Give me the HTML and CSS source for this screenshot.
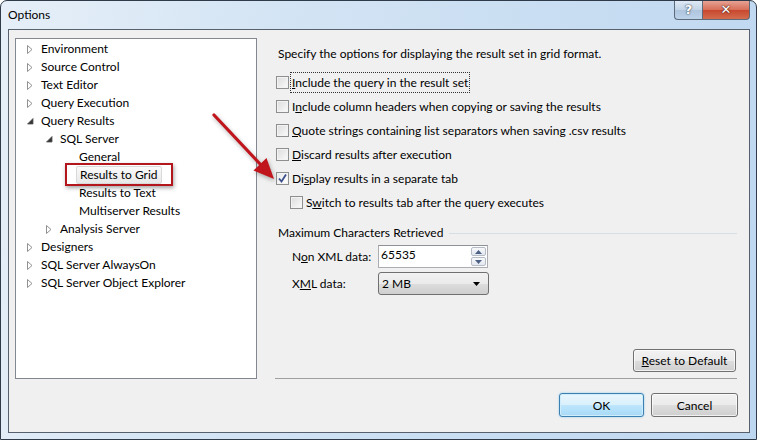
FILE: index.html
```html
<!DOCTYPE html>
<html lang="en">
<head>
  <meta charset="UTF-8" />
  <title>Options</title>
  <link rel="stylesheet" href="styles.css">
</head>
<body>
  <div class="window">
    <div class="titlebar">
      <span class="title">Options</span>
      <div class="caption">
        <span class="cap help">?</span>
        <span class="cap close">&#x2715;</span>
      </div>
    </div>

    <div class="client">
      <div class="main">
        <div class="tree">
          <div class="node l0"><span class="exp"><svg width="6" height="9"><polygon points="0.5,0.5 5,4.5 0.5,8.5" fill="#fff" stroke="#919191"/></svg></span>Environment</div>
          <div class="node l0"><span class="exp"><svg width="6" height="9"><polygon points="0.5,0.5 5,4.5 0.5,8.5" fill="#fff" stroke="#919191"/></svg></span>Source Control</div>
          <div class="node l0"><span class="exp"><svg width="6" height="9"><polygon points="0.5,0.5 5,4.5 0.5,8.5" fill="#fff" stroke="#919191"/></svg></span>Text Editor</div>
          <div class="node l0"><span class="exp"><svg width="6" height="9"><polygon points="0.5,0.5 5,4.5 0.5,8.5" fill="#fff" stroke="#919191"/></svg></span>Query Execution</div>
          <div class="node l0"><span class="exp"><svg width="7" height="7"><polygon points="6,0.5 6,6 0.5,6" fill="#333" stroke="#555" stroke-width="0.8"/></svg></span>Query Results</div>
          <div class="node l1"><span class="exp"><svg width="7" height="7"><polygon points="6,0.5 6,6 0.5,6" fill="#333" stroke="#555" stroke-width="0.8"/></svg></span>SQL Server</div>
          <div class="node l2"><span class="exp"></span>General</div>
          <div class="node l2 selected"><span class="exp"></span><span class="sel">Results to Grid</span><span class="callout"></span></div>
          <div class="node l2"><span class="exp"></span>Results to Text</div>
          <div class="node l2"><span class="exp"></span>Multiserver Results</div>
          <div class="node l1"><span class="exp"><svg width="6" height="9"><polygon points="0.5,0.5 5,4.5 0.5,8.5" fill="#fff" stroke="#919191"/></svg></span>Analysis Server</div>
          <div class="node l0"><span class="exp"><svg width="6" height="9"><polygon points="0.5,0.5 5,4.5 0.5,8.5" fill="#fff" stroke="#919191"/></svg></span>Designers</div>
          <div class="node l0"><span class="exp"><svg width="6" height="9"><polygon points="0.5,0.5 5,4.5 0.5,8.5" fill="#fff" stroke="#919191"/></svg></span>SQL Server AlwaysOn</div>
          <div class="node l0"><span class="exp"><svg width="6" height="9"><polygon points="0.5,0.5 5,4.5 0.5,8.5" fill="#fff" stroke="#919191"/></svg></span>SQL Server Object Explorer</div>
        </div>

        <div class="page">
          <div class="page-body">
            <p class="intro">Specify the options for displaying the result set in grid format.</p>

            <div class="check"><span class="cb"></span><span class="lbl focus"><u>I</u>nclude the query in the result set</span></div>
            <div class="check"><span class="cb"></span><span class="lbl">I<u>n</u>clude column headers when copying or saving the results</span></div>
            <div class="check"><span class="cb"></span><span class="lbl"><u>Q</u>uote strings containing list separators when saving .csv results</span></div>
            <div class="check"><span class="cb"></span><span class="lbl"><u>D</u>iscard results after execution</span></div>
            <div class="check"><span class="cb on"><svg width="11" height="11"><path d="M2 5.5 L4.5 8.5 L9 1.5" fill="none" stroke="#3b4f8c" stroke-width="1.8"/></svg></span><span class="lbl">Di<u>s</u>play results in a separate tab</span></div>
            <div class="check sub"><span class="cb"></span><span class="lbl">S<u>w</u>itch to results tab after the query executes</span></div>

            <div class="group">
              <div class="group-head">Maximum Characters Retrieved</div>
              <div class="field">
                <span class="flabel">N<u>o</u>n XML data:</span>
                <div class="spin">
                  <span class="spin-val">65535</span>
                  <span class="spin-btns">
                    <span class="sb"><svg width="7" height="4"><polygon points="3.5,0 7,4 0,4" fill="#4d6185"/></svg></span>
                    <span class="sb"><svg width="7" height="4"><polygon points="0,0 7,0 3.5,4" fill="#4d6185"/></svg></span>
                  </span>
                </div>
              </div>
              <div class="field">
                <span class="flabel">X<u>M</u>L data:</span>
                <div class="combo">
                  <span>2 MB</span>
                  <svg width="7" height="4"><polygon points="0,0 7,0 3.5,4" fill="#000"/></svg>
                </div>
              </div>
            </div>
          </div>
          <div class="page-foot">
            <button class="btn reset"><u>R</u>eset to Default</button>
          </div>
        </div>
      </div>

      <div class="footer">
        <button class="btn ok">OK</button>
        <button class="btn cancel">Cancel</button>
      </div>
    </div>

    <svg class="arrow" width="757" height="440">
      <line x1="214" y1="115" x2="261" y2="165" stroke="#c0151c" stroke-width="3.2" stroke-linecap="round"/>
      <polygon points="274,179 253.5,170.5 266.5,158" fill="#c0151c"/>
    </svg>
  </div>
</body>
</html>
```

FILE: styles.css
```css
body {
  margin: 0;
  font-family: Lato, "Noto Sans", sans-serif;
  font-size: 12px;
  color: #000;
}

.window {
  position: relative;
  width: 757px;
  height: 440px;
  box-sizing: border-box;
  border: 1px solid #2f3b48;
  border-radius: 7px 7px 0 0;
  background: linear-gradient(100deg, #e6eff8 0%, #d3e4f4 35%, #bed7f0 100%);
  display: flex;
  flex-direction: column;
  overflow: hidden;
}

.titlebar {
  height: 28px;
  display: flex;
  justify-content: space-between;
  align-items: flex-start;
  padding: 0 6px 0 7px;
}
.title {
  line-height: 28px;
  font-size: 12px;
}
.caption {
  display: flex;
  margin-top: -1px;
}
.cap {
  height: 19px;
  display: flex;
  align-items: center;
  justify-content: center;
  border: 1px solid #5c6a7a;
  border-top: none;
  font-family: "DejaVu Sans", sans-serif;
  font-weight: bold;
  color: #fff;
}
.help {
  width: 27px;
  border-radius: 0 0 0 4px;
  border-right: none;
  background: linear-gradient(#e2ecf6, #c3d5e8 50%, #aec4dc 51%, #bcd3ea);
  color: #fff;
  font-size: 13px;
  text-shadow: 0 0 2px #3b4a5c, 0 0 1px #3b4a5c;
}
.close {
  width: 46px;
  border-radius: 0 0 4px 0;
  background: linear-gradient(#e8a89a, #d8705a 50%, #c7452c 51%, #d36c4f);
  font-size: 13px;
  text-shadow: 0 0 2px #4a1a12, 0 0 1px #4a1a12;
}

.client {
  flex: 1;
  margin: 0 6px 6px 7px;
  border: 1px solid #56616d;
  background: #f0f0f0;
  display: flex;
  flex-direction: column;
  padding: 8px 12px 0 6px;
}

.main {
  display: flex;
  gap: 18px;
  height: 341px;
}

/* tree */
.tree {
  width: 242px;
  box-sizing: border-box;
  border: 1px solid #828790;
  background: #fff;
  padding-top: 1px;
}
.node {
  position: relative;
  height: 18px;
  line-height: 18px;
  display: flex;
  align-items: center;
  white-space: nowrap;
}
.node.l0 { padding-left: 10px; }
.node.l1 { padding-left: 29px; }
.node.l2 { padding-left: 48px; }
.exp {
  width: 15px;
  display: flex;
  align-items: center;
  padding-left: 1px;
  box-sizing: border-box;
}
.sel {
  margin-left: -3px;
  padding: 0 3px;
  line-height: 16px;
  border: 1px solid #d9d9d9;
  border-radius: 2px;
  background: linear-gradient(#fafafa, #e8e8e8);
}
.callout {
  position: absolute;
  left: 49px;
  top: -3px;
  width: 108px;
  height: 23px;
  box-sizing: border-box;
  border: 2px solid #b3161d;
  box-shadow: 1px 2px 4px rgba(0, 0, 0, 0.35);
}

/* right page */
.page {
  flex: 1;
  display: flex;
  flex-direction: column;
}
.page-body {
  flex: 1;
  padding-top: 8px;
}
.intro {
  margin: 0 0 8px 3px;
  line-height: 16px;
}
.check {
  height: 24px;
  display: flex;
  align-items: center;
  margin-left: 1px;
}
.check.sub {
  margin-left: 15px;
}
.cb {
  width: 13px;
  height: 13px;
  box-sizing: border-box;
  border: 1px solid #8e8f8f;
  background: linear-gradient(135deg, #dcdcdc, #fbfbfb);
  box-shadow: inset 0 0 0 1px #f3f3f3;
  display: flex;
  align-items: center;
  justify-content: center;
}
.cb.on {
  background: linear-gradient(135deg, #e8e8e8, #ffffff);
}
.lbl {
  margin-left: 1px;
  line-height: 15px;
  padding: 2px 1px;
  border: 1px dotted transparent;
}
.lbl.focus {
  border-color: #333;
}

.group {
  margin-top: 11px;
}
.group-head {
  display: flex;
  align-items: center;
  margin-left: 3px;
  line-height: 16px;
}
.group-head::after {
  content: "";
  flex: 1;
  margin-left: 6px;
  border-top: 1px solid #d5dfe5;
}
.field {
  display: flex;
  align-items: center;
  margin-top: 4px;
  padding-left: 17px;
}
.flabel {
  width: 86px;
}
.spin {
  width: 110px;
  height: 23px;
  box-sizing: border-box;
  border: 1px solid #abadb3;
  border-top-color: #8e9196;
  background: #fff;
  display: flex;
  justify-content: space-between;
}
.spin-val {
  padding: 1px 0 0 2px;
  line-height: 16px;
}
.spin-btns {
  display: flex;
  flex-direction: column;
  justify-content: center;
  gap: 1px;
  padding: 1px;
}
.sb {
  width: 15px;
  height: 9px;
  display: flex;
  align-items: center;
  justify-content: center;
  border: 1px solid #b6bcc6;
  border-radius: 2px;
  box-sizing: border-box;
  background: linear-gradient(#f7f9fb, #e3e8ef);
}
.combo {
  width: 111px;
  height: 23px;
  box-sizing: border-box;
  border: 1px solid #707070;
  border-radius: 3px;
  background: linear-gradient(#f2f2f2, #ebebeb 50%, #dddddd 51%, #cfcfcf);
  display: flex;
  align-items: center;
  justify-content: space-between;
  padding: 0 8px 0 3px;
}

.page-foot {
  display: flex;
  justify-content: flex-end;
  padding: 0 1px 6px 0;
  border-bottom: 1px solid #a0a0a0;
}

/* buttons */
.btn {
  font: inherit;
  height: 23px;
  padding: 0;
  border: 1px solid #707070;
  border-radius: 3px;
  background: linear-gradient(#f2f2f2, #ebebeb 50%, #dddddd 51%, #cfcfcf);
  box-shadow: inset 0 0 0 1px rgba(255, 255, 255, 0.7);
  color: #000;
}
.reset {
  width: 103px;
}
.footer {
  display: flex;
  justify-content: flex-end;
  gap: 7px;
  padding: 14px 0 14px 0;
  margin-right: -1px;
}
.ok {
  width: 85px;
  height: 24px;
  border-color: #3c7fb1;
  background: linear-gradient(#eaf6fd, #d9f0fc 50%, #bee6fd 51%, #a7d9f5);
  box-shadow: inset 0 0 0 1px #d0edfb, 0 0 2px #7fc4ec;
}
.cancel {
  width: 87px;
  height: 24px;
}

.arrow {
  position: absolute;
  left: -1px;
  top: -1px;
  pointer-events: none;
  filter: drop-shadow(1px 2px 2px rgba(0, 0, 0, 0.3));
}
```
